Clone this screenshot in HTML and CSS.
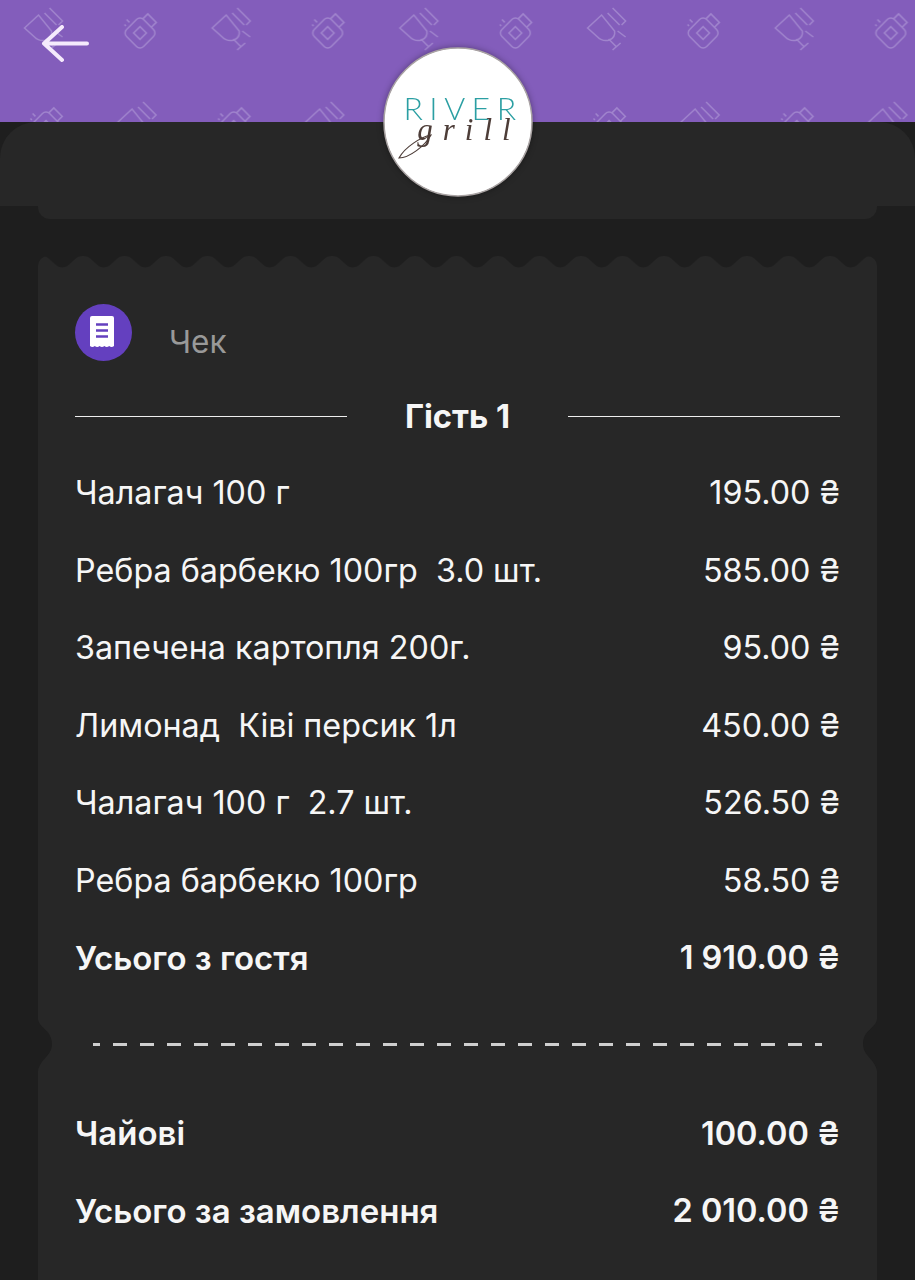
FILE: index.html
```html
<!DOCTYPE html>
<html lang="uk">
<head>
  <meta charset="UTF-8">
  <meta name="viewport" content="width=device-width, initial-scale=1.0">
  <title>River Grill</title>
  <link rel="stylesheet" href="styles.css">
</head>
<body>

  <header class="hero">
    <svg class="hero-pattern" width="915" height="122" aria-hidden="true">
      <defs>
        <g id="glass" class="motif">
          <path d="M0 0L14-13L27 3Q28 9 22 12Q15 14 10 9Z"/>
          <path d="M21 11L29 19M25 22L33 15"/>
          <path d="M20-15L32-3M25-20L38-7L34-3M30 3L38 9"/>
        </g>
        <g id="cup" class="motif">
          <g transform="rotate(-45)">
            <rect x="-12" y="-12" width="24" height="24" rx="5"/>
            <rect x="-4.5" y="-4.5" width="9" height="9"/>
            <path d="M12-8H19V4H12"/>
            <path d="M-5-17V-15M0-19V-15"/>
          </g>
        </g>
        <pattern id="food" width="187.7" height="188" patternUnits="userSpaceOnUse">
          <use href="#glass" x="24.5" y="28"/>
          <use href="#cup" x="140" y="33"/>
          <use href="#glass" x="118" y="122"/>
          <use href="#cup" x="46" y="127"/>
        </pattern>
      </defs>
      <rect width="915" height="122" fill="url(#food)"/>
    </svg>

    <svg class="back" width="50" height="40" viewBox="0 0 50 40">
      <path d="M46 18.500H3M21 2L3 18.500L21 35"/>
    </svg>

    <svg class="logo" width="150" height="150" viewBox="0 0 150 150">
      <circle cx="75" cy="75" r="74"/>
      <text class="logo-river" x="80" y="73" text-anchor="middle">RIVER</text>
      <text class="logo-grill" x="86" y="93" text-anchor="middle">grill</text>
      <path class="logo-swash" d="M16 111C26 111 42 99 48 88C38 90 22 100 16 111Z"/>
    </svg>
  </header>

  <div class="sheet"></div>
  <div class="stub"></div>

  <main class="ticket">
    <svg class="scallop" width="839" height="13" aria-hidden="true">
      <defs>
        <pattern id="wave" x="24.250" width="41.500" height="13" patternUnits="userSpaceOnUse">
          <path d="M0 11.500C9 11.500 11 0 20.750 0S33 11.500 41.500 11.500V13H0Z"/>
        </pattern>
      </defs>
      <rect width="839" height="13" fill="url(#wave)"/>
    </svg>

    <div class="ticket-body">
      <div class="title-row">
        <span class="title-icon">
          <svg width="57" height="57" viewBox="0 0 57 57">
            <path class="receipt" d="M15 14a2 2 0 0 1 2-2H37a2 2 0 0 1 2 2V42q-2.400 2-4.800 0q-2.400 2-4.800 0q-2.400 2-4.800 0q-2.400 2-4.800 0q-2.400 2-4.800 0Z"/>
            <path class="receipt-lines" d="M21 20.500H33M21 26.500H33M21 32.500H33"/>
          </svg>
        </span>
        <span class="title">Чек</span>
      </div>

      <div class="guest"><span>Гість 1</span></div>

      <div class="row"><span>Чалагач 100 г</span><span>195.00 ₴</span></div>
      <div class="row"><span>Ребра барбекю 100гр&nbsp; 3.0 шт.</span><span>585.00 ₴</span></div>
      <div class="row"><span>Запечена картопля 200г.</span><span>95.00 ₴</span></div>
      <div class="row"><span>Лимонад&nbsp; Ківі персик 1л</span><span>450.00 ₴</span></div>
      <div class="row"><span>Чалагач 100 г&nbsp; 2.7 шт.</span><span>526.50 ₴</span></div>
      <div class="row"><span>Ребра барбекю 100гр</span><span>58.50 ₴</span></div>
      <div class="row row-bold"><span>Усього з гостя</span><span class="sum">1 910.00 ₴</span></div>

      <div class="dashes"></div>

      <div class="row row-bold"><span>Чайові</span><span class="sum">100.00 ₴</span></div>
      <div class="row row-bold"><span>Усього за замовлення</span><span class="sum">2 010.00 ₴</span></div>
    </div>

    <svg class="notch notch-left" width="15" height="52" viewBox="0 0 15 52"><path d="M0 0C1 9 14 11 14 25C14 37 2 40 0 52Z"/></svg>
    <svg class="notch notch-right" width="15" height="52" viewBox="0 0 15 52"><path d="M15 0C14 9 1 11 1 25C1 37 13 40 15 52Z"/></svg>
  </main>

</body>
</html>
```

FILE: styles.css
```css
html, body {
  margin: 0;
  height: 1280px;
  overflow: hidden;
}
body {
  background: #1e1e1e;
  color: #f6f6f6;
  font-family: Inter, "Noto Sans", sans-serif;
  font-size: 32.300px;
}

.hero {
  position: relative;
  height: 122px;
  background: #835dbb;
}
.hero-pattern {
  display: block;
}
.motif {
  fill: none;
  stroke: #a084cd;
  stroke-width: 1.500;
}
.back {
  position: absolute;
  left: 41px;
  top: 25px;
  fill: none;
  stroke: #f5eafc;
  stroke-width: 4;
  stroke-linecap: round;
  stroke-linejoin: round;
}
.logo {
  position: absolute;
  left: 382.500px;
  top: 47px;
  z-index: 2;
  filter: drop-shadow(0 0 3px rgba(0, 0, 0, .35));
}
.logo circle {
  fill: #fff;
  stroke: #a9a3a3;
  stroke-width: 1.500;
}
.logo-river {
  font-family: Lato, sans-serif;
  font-size: 32px;
  font-weight: 300;
  letter-spacing: 6.500px;
  fill: #2b9fa3;
}
.logo-grill {
  font-family: "Liberation Serif", serif;
  font-style: italic;
  font-size: 31px;
  letter-spacing: 10px;
  fill: #4d3d38;
}
.logo-swash {
  fill: none;
  stroke: #4d3d38;
  stroke-width: 1.200;
}

.sheet {
  height: 84px;
  background: #272727;
  border-radius: 36px 36px 0 0;
}
.stub {
  height: 13px;
  margin: 0 38px;
  background: #272727;
  border-radius: 0 0 12px 12px;
}

.ticket {
  position: relative;
  width: 839px;
  margin: 37px 0 0 38px;
}
.scallop {
  display: block;
  margin-bottom: -1px;
  border-radius: 10px 10px 0 0;
}
.scallop path {
  fill: #272727;
}
.ticket-body {
  background: #272727;
  padding: 36px 37px 60px;
}

.title-row {
  display: flex;
  gap: 37px;
}
.title-icon {
  width: 57px;
  height: 57px;
  border-radius: 50%;
  background: #6440bf;
}
.title-icon svg {
  display: block;
}
.receipt {
  fill: #fff;
}
.receipt-lines {
  fill: none;
  stroke: #6440bf;
  stroke-width: 2.500;
}
.title {
  margin-top: 19px;
  font-size: 31.500px;
  line-height: 38px;
  color: #999;
}

.guest {
  display: flex;
  align-items: center;
  gap: 58px;
  height: 38px;
  margin: 36px 0 19px;
  font-size: 32.700px;
  font-weight: 700;
}
.guest::before, .guest::after {
  content: "";
  flex: 1;
  height: 1px;
  background: #eee;
}

.row {
  display: flex;
  justify-content: space-between;
  align-items: center;
  height: 77.500px;
}
.row-bold {
  font-size: 33px;
  font-weight: 600;
}
.sum {
  font-size: 32.500px;
}

.dashes {
  width: 729px;
  height: 3px;
  margin: 46px 0 49px 18px;
  background: linear-gradient(90deg, #cfcfcf 14.500px, transparent 14.500px) -7px 0 / 27px 3px;
}

.notch {
  position: absolute;
  top: 763px;
  fill: #1e1e1e;
}
.notch-left {
  left: 0;
}
.notch-right {
  right: 0;
}
```
